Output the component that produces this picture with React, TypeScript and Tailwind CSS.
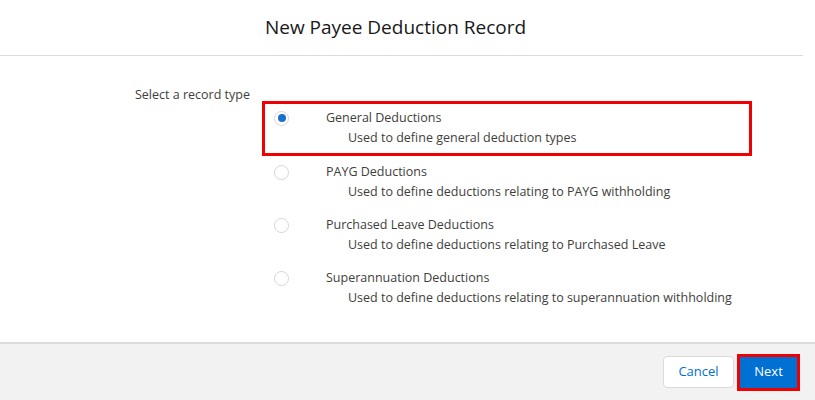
const options = [
  { name: 'General Deductions', desc: 'Used to define general deduction types' },
  { name: 'PAYG Deductions', desc: 'Used to define deductions relating to PAYG withholding' },
  { name: 'Purchased Leave Deductions', desc: 'Used to define deductions relating to Purchased Leave' },
  { name: 'Superannuation Deductions', desc: 'Used to define deductions relating to superannuation withholding' },
];

function Radio({ checked }: { checked: boolean }) {
  return (
    <span className="flex h-[15px] w-[15px] items-center justify-center rounded-full border border-[#d8d6d4] bg-white">
      {checked && <span className="h-[8px] w-[8px] rounded-full bg-[#1b6fd0]" />}
    </span>
  );
}

export default function App() {
  const selected = 0;

  return (
    <div className="flex h-[400px] w-[815px] flex-col bg-white text-[#3e3e3c]" style={{ fontFamily: '"Open Sans", "Noto Sans", sans-serif' }}>
      <div className="mr-[12px] flex h-[56px] items-center justify-center border-b border-[#dddbda] pr-[12px]">
        <h2 className="text-[19px] text-[#181818]">New Payee Deduction Record</h2>
      </div>

      <div className="flex-1 pt-[30px]">
        <div className="mb-[-3px] pl-[135px] text-[12.5px] leading-[18px]">Select a record type</div>
        <div className="ml-[262px] w-[490px]">
          {options.map((o, i) => (
            <div
              key={o.name}
              className={`border-[3px] pt-[5px] pl-[9px] ${i === selected ? 'h-[55px] mb-[-1px] border-[#f00000]' : 'h-[53px] border-transparent'}`}
            >
              <div className="flex h-[18px] items-center">
                <Radio checked={i === selected} />
                <span className="ml-[37px] text-[12.5px] leading-[18px]">{o.name}</span>
              </div>
              <div className="ml-[74px] mt-[2px] text-[12.5px] leading-[18px]">{o.desc}</div>
            </div>
          ))}
        </div>
      </div>

      <div className="flex h-[58px] items-center justify-end gap-[3px] border-t-2 border-[#dddbda] bg-[#f3f2f2] pr-[15px]">
        <button className="h-[32px] w-[71px] rounded-[4px] border border-[#dddbda] bg-white text-[13px] text-[#0070d2]">
          Cancel
        </button>
        <div className="border-[3px] border-[#f00000]">
          <button className="h-[31px] w-[57px] bg-[#0070d2] text-[13px] text-white">Next</button>
        </div>
      </div>
    </div>
  );
}
